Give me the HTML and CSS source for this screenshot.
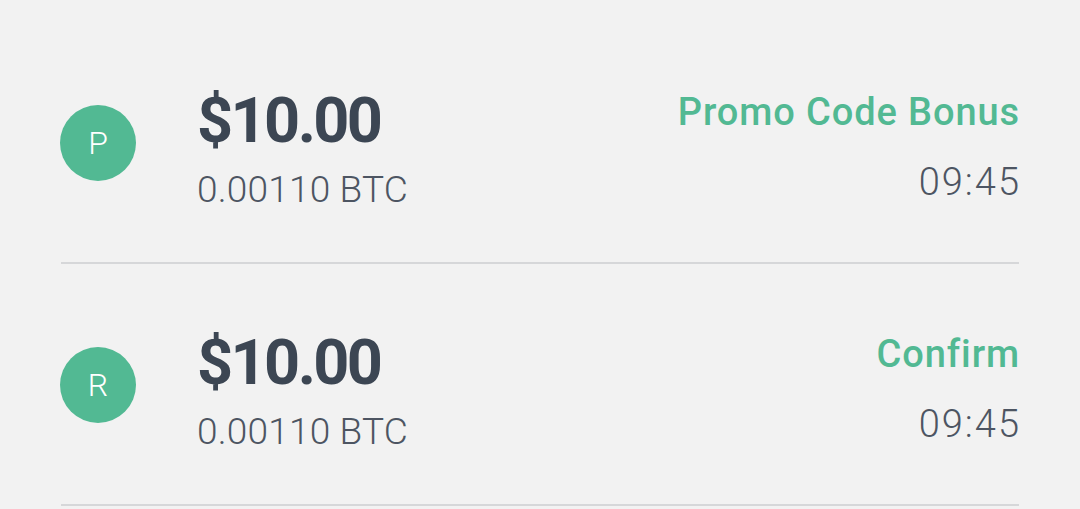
FILE: index.html
```html
<!DOCTYPE html>
<html>
<head>
<meta charset="utf-8">
<link rel="stylesheet" href="styles.css">
</head>
<body>
<div class="list">
  <div class="row">
    <div class="avatar">P</div>
    <div class="amounts">
      <div class="usd">$10.00</div>
      <div class="btc">0.00110 BTC</div>
    </div>
    <div class="meta">
      <div class="label">Promo Code Bonus</div>
      <div class="time">09:45</div>
    </div>
  </div>
  <div class="row">
    <div class="avatar">R</div>
    <div class="amounts">
      <div class="usd">$10.00</div>
      <div class="btc">0.00110 BTC</div>
    </div>
    <div class="meta">
      <div class="label">Confirm</div>
      <div class="time">09:45</div>
    </div>
  </div>
</div>
</body>
</html>
```

FILE: styles.css
```css
html, body {
  margin: 0;
  padding: 0;
  background: #f2f2f2;
  font-family: "Roboto", "Liberation Sans", sans-serif;
}
.list {
  padding: 22px 61px 0;
}
.row {
  display: flex;
  align-items: flex-start;
  height: 173px;
  padding-top: 67px;
  border-bottom: 2px solid #d6d7d9;
}
.avatar {
  width: 76px;
  height: 76px;
  margin-top: 16px;
  margin-left: -1px;
  border-radius: 50%;
  background: #52b993;
  color: #ffffff;
  font-size: 32px;
  font-weight: 300;
  display: flex;
  align-items: center;
  justify-content: center;
  flex-shrink: 0;
}
.amounts {
  margin-left: 61px;
  flex: 1;
}
.usd {
  font-size: 63px;
  line-height: 64px;
  font-weight: 700;
  color: #3c4653;
  letter-spacing: -2.6px;
}
.btc {
  margin-top: 15px;
  font-size: 37px;
  line-height: 44px;
  font-weight: 300;
  color: #4d5562;
  letter-spacing: 0.2px;
}
.meta {
  text-align: right;
  margin-top: 1px;
}
.label {
  font-size: 38px;
  line-height: 44px;
  font-weight: 500;
  color: #52b993;
  letter-spacing: 0.9px;
  margin-right: -1px;
}
.time {
  margin-top: 26px;
  font-size: 38px;
  line-height: 44px;
  font-weight: 300;
  color: #4d5562;
  letter-spacing: 2px;
  margin-right: -2px;
}
```
